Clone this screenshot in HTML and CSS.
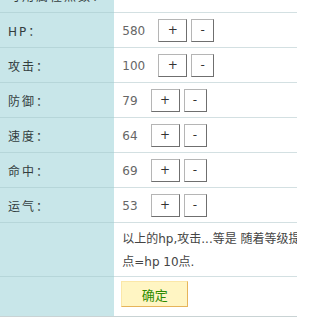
FILE: index.html
```html
<!DOCTYPE html>
<html lang="zh">
<head>
<meta charset="utf-8">
<title>属性</title>
<link rel="stylesheet" href="styles.css">
</head>
<body>
<div class="frame">
<table class="attr">
  <tr class="row top">
    <td class="label">可用属性点数：</td>
    <td class="value">5</td>
  </tr>
  <tr class="row">
    <td class="label">HP：</td>
    <td class="value"><span class="num">580</span><button class="btn plus">+</button><button class="btn minus">-</button></td>
  </tr>
  <tr class="row">
    <td class="label">攻击：</td>
    <td class="value"><span class="num">100</span><button class="btn plus">+</button><button class="btn minus">-</button></td>
  </tr>
  <tr class="row">
    <td class="label">防御：</td>
    <td class="value"><span class="num">79</span><button class="btn plus">+</button><button class="btn minus">-</button></td>
  </tr>
  <tr class="row">
    <td class="label">速度：</td>
    <td class="value"><span class="num">64</span><button class="btn plus">+</button><button class="btn minus">-</button></td>
  </tr>
  <tr class="row">
    <td class="label">命中：</td>
    <td class="value"><span class="num">69</span><button class="btn plus">+</button><button class="btn minus">-</button></td>
  </tr>
  <tr class="row">
    <td class="label">运气：</td>
    <td class="value"><span class="num">53</span><button class="btn plus">+</button><button class="btn minus">-</button></td>
  </tr>
  <tr class="note-row">
    <td class="label"></td>
    <td class="note">以上的hp,攻击...等是 随着等级提升而自动增加的,1属性<br>点=hp 10点.</td>
  </tr>
  <tr class="submit-row">
    <td class="label"></td>
    <td class="submit"><button class="ok">确定</button></td>
  </tr>
</table>
</div>
</body>
</html>
```
FILE: styles.css
```css
html, body {
  margin: 0;
  padding: 0;
  overflow: hidden;
  background: #ffffff;
}
body {
  font-family: "DejaVu Sans", "Noto Sans CJK SC", sans-serif;
  font-size: 12px;
  color: #333;
}
.frame {
  width: 297px;
  overflow: hidden;
}
.attr {
  border-collapse: collapse;
  width: 420px;
  margin-top: -22px;
}
.attr td {
  padding: 0;
  border-bottom: 1px solid #d3e0e2;
  vertical-align: middle;
}
.attr td.label {
  width: 110px;
  padding-left: 8px;
  background: #c8e6e9;
  border-bottom-color: #b6d6d9;
  letter-spacing: 2px;
  color: #333d3e;
  white-space: nowrap;
}
.row td {
  height: 34px;
}
.value {
  padding-left: 8px !important;
  color: #666;
}
.num {
  display: inline-block;
  vertical-align: middle;
  padding-top: 2px;
}
.btn {
  font-family: "DejaVu Sans", sans-serif;
  font-size: 12px;
  color: #333;
  background: #fff;
  height: 23px;
  padding: 0;
  border: 1px solid;
  border-color: #b5b5b5 #6f6f6f #6f6f6f #b5b5b5;
  vertical-align: middle;
  margin: 0;
}
.btn.plus {
  width: 29px;
  margin-left: 13px;
}
.btn.minus {
  width: 23px;
  margin-left: 4px;
}
.note-row td {
  height: 50px;
}
.note {
  padding: 3px 0 0 8px !important;
  line-height: 23px;
  color: #444;
  white-space: nowrap;
}
.submit-row td {
  height: 35px;
  border-bottom-color: #c9d3d4 !important;
}
.submit {
  padding: 4px 0 0 7px !important;
  vertical-align: top !important;
}
.ok {
  width: 67px;
  height: 26px;
  background: #fff5c3;
  border: 1px solid;
  border-color: #fbe7a8 #e6b45a #e6b45a #fbe7a8;
  color: #2d8c00;
  font-family: "Noto Sans CJK SC", sans-serif;
  font-size: 13px;
  padding: 0;
}
```
